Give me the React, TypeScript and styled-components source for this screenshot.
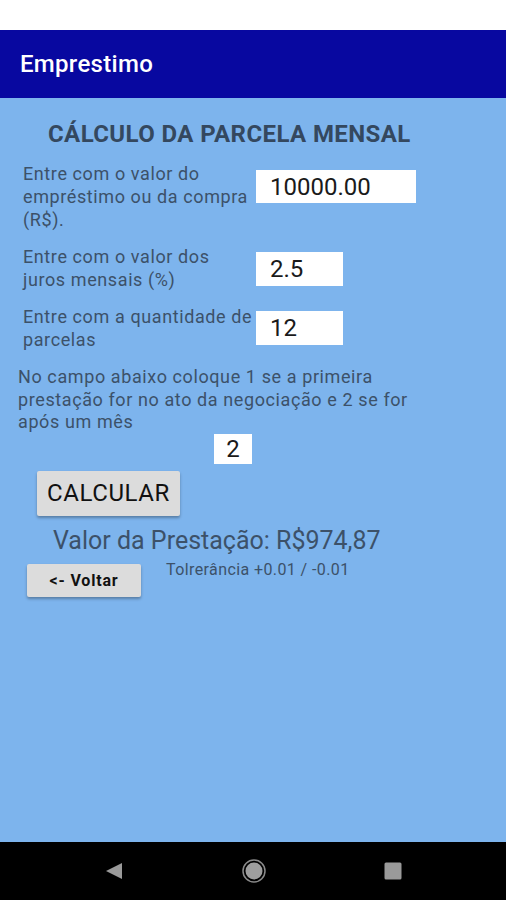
import React, { FC } from "react";
import styled, { createGlobalStyle } from "styled-components";

const GlobalStyle = createGlobalStyle`
  html, body {
    margin: 0;
    padding: 0;
    background: #ffffff;
  }
  * {
    box-sizing: border-box;
  }
`;

const Screen = styled.div`
  display: flex;
  flex-direction: column;
  width: 506px;
  height: 900px;
  font-family: Roboto, "Liberation Sans", sans-serif;
`;
const StatusBar = styled.div`
  height: 30px;
  background: #ffffff;
`;
const AppBar = styled.header`
  display: flex;
  align-items: center;
  height: 68px;
  padding-left: 20px;
  background: #0808a0;
  color: #ffffff;
  font-size: 24px;
  letter-spacing: 0.3px;
  font-weight: 500;
`;
const Content = styled.main`
  flex: 1;
  display: flex;
  flex-direction: column;
  background: #7db4ed;
  color: #3c5169;
`;
const Title = styled.h1`
  margin: 22px 0 14px 48px;
  font-size: 24px;
  line-height: 28px;
  letter-spacing: 0.4px;
  font-weight: 700;
  color: #34485f;
`;
const FieldRow = styled.div<{ $gap: number }>`
  display: flex;
  align-items: flex-start;
  padding-left: 23px;
  margin-bottom: ${(p) => p.$gap}px;
`;
const Label = styled.div`
  width: 230px;
  margin-right: 3px;
  font-size: 18px;
  line-height: 23px;
  letter-spacing: 0.6px;
`;
const Field = styled.div<{ $w: number; $h: number; $top: number }>`
  flex-shrink: 0;
  width: ${(p) => p.$w}px;
  height: ${(p) => p.$h}px;
  margin-top: ${(p) => p.$top}px;
  padding-left: 14px;
  display: flex;
  align-items: center;
  background: #ffffff;
  color: #1a1a1a;
  font-size: 24px;
`;
const Note = styled.p`
  margin: 0 0 0 18px;
  width: 405px;
  font-size: 18px;
  line-height: 22.5px;
  letter-spacing: 0.6px;
`;
const SmallField = styled(Field)`
  margin-left: 214px;
  padding-left: 0;
  justify-content: center;
`;
const CalcButton = styled.button`
  align-self: flex-start;
  margin: 7px 0 0 37px;
  width: 143px;
  height: 45px;
  border: none;
  border-radius: 2px;
  background: #dcdcdc;
  box-shadow: 0 2px 3px rgba(0, 0, 0, 0.3);
  font-family: inherit;
  font-size: 24px;
  letter-spacing: 0.6px;
  font-weight: 400;
  color: #111111;
  padding: 0;
`;
const Result = styled.div`
  margin: 11px 0 0 53px;
  font-size: 25px;
  line-height: 28px;
`;
const BottomRow = styled.div`
  display: flex;
  align-items: flex-start;
  gap: 25px;
  margin: 9px 0 0 27px;
`;
const BackButton = styled.button`
  width: 114px;
  height: 33px;
  border: none;
  border-radius: 2px;
  background: #dcdcdc;
  box-shadow: 0 2px 3px rgba(0, 0, 0, 0.3);
  font-family: inherit;
  font-size: 16px;
  letter-spacing: 0.8px;
  font-weight: 700;
  color: #111111;
  padding: 0;
`;
const Tolerance = styled.span`
  font-size: 16px;
  line-height: 18px;
  letter-spacing: 0.4px;
  margin-top: -3px;
`;
const NavBar = styled.nav`
  height: 58px;
  display: flex;
  align-items: center;
  justify-content: space-between;
  padding: 0 101px 0 102px;
  background: #000000;
`;

const NavIcon: FC<{ kind: "back" | "home" | "recent" }> = ({ kind }) => (
  <svg width="24" height="24" viewBox="0 0 24 24">
    {kind === "back" && <path d="M20 4 L20 20 L4 12 Z" fill="#9a9a9a" />}
    {kind === "home" && (
      <>
        <circle cx="12" cy="12" r="11" fill="none" stroke="#8a8a8a" strokeWidth="1.5" />
        <circle cx="12" cy="12" r="8.5" fill="#9e9e9e" />
      </>
    )}
    {kind === "recent" && <rect x="3.5" y="3.5" width="17" height="17" rx="1.5" fill="#9a9a9a" />}
  </svg>
);

const App: FC = () => (
  <>
    <GlobalStyle />
    <Screen>
      <StatusBar />
      <AppBar>Emprestimo</AppBar>
      <Content>
        <Title>CÁLCULO DA PARCELA MENSAL</Title>
        <FieldRow $gap={14}>
          <Label>Entre com o valor do empréstimo ou da compra (R$).</Label>
          <Field $w={160} $h={33} $top={8}>10000.00</Field>
        </FieldRow>
        <FieldRow $gap={14}>
          <Label>Entre com o valor dos juros mensais (%)</Label>
          <Field $w={87} $h={34} $top={7}>2.5</Field>
        </FieldRow>
        <FieldRow $gap={15}>
          <Label>Entre com a quantidade de parcelas</Label>
          <Field $w={87} $h={34} $top={6}>12</Field>
        </FieldRow>
        <Note>
          No campo abaixo coloque 1 se a primeira prestação for no ato da negociação e 2 se for
          após um mês
        </Note>
        <SmallField $w={38} $h={30} $top={0}>2</SmallField>
        <CalcButton>CALCULAR</CalcButton>
        <Result>Valor da Prestação: R$974,87</Result>
        <BottomRow>
          <BackButton>&lt;- Voltar</BackButton>
          <Tolerance>Tolrerância +0.01 / -0.01</Tolerance>
        </BottomRow>
      </Content>
      <NavBar>
        <NavIcon kind="back" />
        <NavIcon kind="home" />
        <NavIcon kind="recent" />
      </NavBar>
    </Screen>
  </>
);

export default App;
